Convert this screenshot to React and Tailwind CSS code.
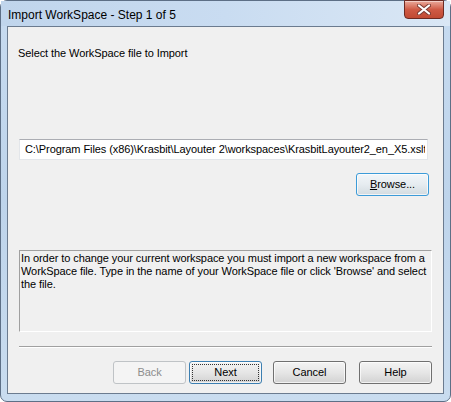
import { Fragment } from 'react';

const ui = { fontFamily: '"Liberation Sans", Arial, sans-serif' };

function CloseButton() {
  return (
    <div className="mt-[-1px] flex h-[19px] w-[40px] items-center justify-center rounded-b-[4px] border border-[#6d2a22] bg-gradient-to-b from-[#e9a99b] via-[#cf5a45] to-[#c14a33] shadow-[inset_0_1px_0_rgba(255,255,255,0.45)]">
      <svg width="14" height="11" viewBox="0 0 14 11">
        <path d="M2 1.5 L12 9.5 M12 1.5 L2 9.5" stroke="#7a3a32" strokeWidth="4" strokeLinecap="round" />
        <path d="M2 1.5 L12 9.5 M12 1.5 L2 9.5" stroke="#ffffff" strokeWidth="2.2" strokeLinecap="round" />
      </svg>
    </div>
  );
}

function Button({ children, kind }) {
  if (kind === 'disabled') {
    return (
      <div className="flex h-[23px] w-[73px] items-center justify-center rounded-[3px] border border-[#bfc3c6] bg-[#f4f4f4] text-[11px] text-[#8d8d8d]">
        {children}
      </div>
    );
  }
  const border = kind === 'default' ? 'border-[#3c7fb1]' : kind === 'hot' ? 'border-[#3c9bd8]' : 'border-[#707070]';
  const fill =
    kind === 'hot'
      ? 'bg-gradient-to-b from-[#f2f6f9] via-[#e6ecf0] to-[#d3dbe0]'
      : 'bg-gradient-to-b from-[#f4f4f4] via-[#e6e6e6] to-[#d2d2d2]';
  return (
    <div className={`flex h-[23px] w-[73px] items-center justify-center rounded-[3px] border ${border} ${fill} p-[2px] text-[11px] text-black shadow-[inset_0_0_0_1px_rgba(255,255,255,0.7)]`}>
      <div className={`flex h-full w-full items-center justify-center ${kind === 'default' ? 'outline outline-1 outline-dotted outline-[#333] outline-offset-[-1px]' : ''}`}>
        {children}
      </div>
    </div>
  );
}

export default function App() {
  const info = [
    'In order to change your current workspace you must import a new workspace from a',
    "WorkSpace file. Type in the name of your WorkSpace file or click 'Browse' and select",
    'the file.',
  ];

  return (
    <div className="h-[402px] w-[451px] overflow-hidden bg-white" style={ui}>
      <div className="flex h-[402px] w-[451px] flex-col rounded-[7px] border border-[#5d6f86] bg-gradient-to-b from-[#c7dbf0] via-[#bed4eb] to-[#c9dcef]">
        {/* title bar */}
        <div className="flex h-[25px] items-start justify-between bg-gradient-to-r from-[#c0d5ec] via-[#c9dcf1] to-[#dae7f5]">
          <div className="pl-[7px] pt-[7px] text-[12px] leading-[14px] text-black">Import WorkSpace - Step 1 of 5</div>
          <div className="pr-[6px]">
            <CloseButton />
          </div>
        </div>

        {/* client area */}
        <div className="mx-[6px] mb-[7px] flex flex-1 flex-col border border-[#6b7b8f] bg-[#f0f0f0] pl-[11px] text-[11px] tracking-[-0.08px] text-black">
          <div className="ml-[-1px] mt-[20px] h-[13px] leading-[13px]">Select the WorkSpace file to Import</div>

          <div className="mt-[79px] flex h-[21px] w-[409px] items-center overflow-hidden whitespace-nowrap border border-[#e3e6ea] border-t-[#abadb3] bg-white pl-[5px] pr-[2px]">
            <span className="overflow-hidden">C:\Program Files (x86)\Krasbit\Layouter 2\workspaces\KrasbitLayouter2_en_X5.xslt</span>
          </div>

          <div className="ml-[337px] mt-[13px]">
            <Button kind="hot">
              <span>
                <span className="underline">B</span>rowse...
              </span>
            </Button>
          </div>

          <div className="mt-[54px] h-[82px] w-[413px] border border-[#a0a0a0] border-b-white border-r-white pl-[1px] pt-[1px] leading-[13px]">
            {info.map((line) => (
              <Fragment key={line}>
                <div className="whitespace-nowrap">{line}</div>
              </Fragment>
            ))}
          </div>

          <div className="mt-[14px] h-[2px] w-[413px] border-t border-[#a0a0a0] border-b border-b-white" />

          <div className="ml-[94px] mt-[13px] flex">
            <Button kind="disabled">Back</Button>
            <div className="ml-[3px]">
              <Button kind="default">Next</Button>
            </div>
            <div className="ml-[11px]">
              <Button>Cancel</Button>
            </div>
            <div className="ml-[13px]">
              <Button>Help</Button>
            </div>
          </div>
        </div>
      </div>
    </div>
  );
}
